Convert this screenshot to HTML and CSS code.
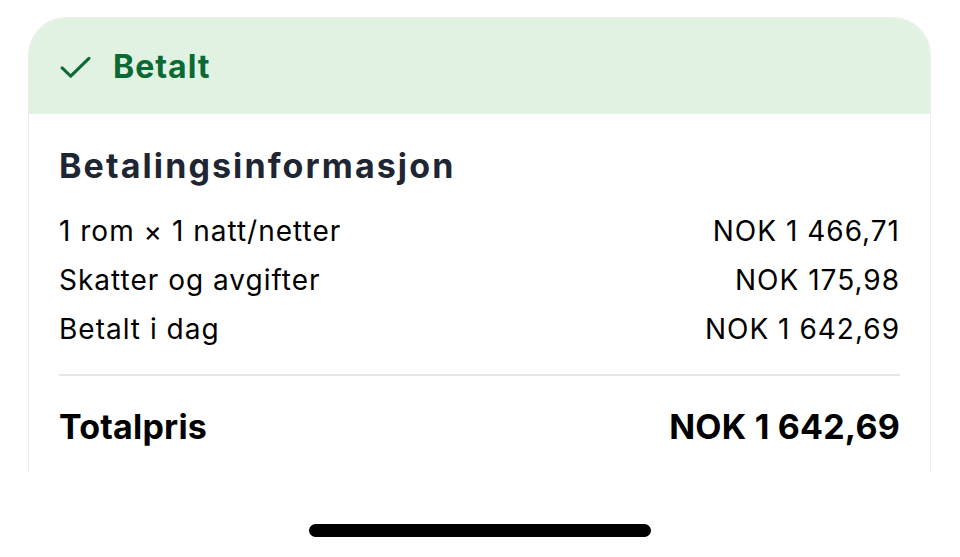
FILE: index.html
```html
<!DOCTYPE html>
<html lang="no">
<head>
<meta charset="utf-8">
<title>Betalt</title>
<link rel="stylesheet" href="styles.css">
</head>
<body>
<div class="screen">
  <section class="card">
    <header class="status">
      <svg class="check" viewBox="0 0 32 24" width="32" height="24" aria-hidden="true">
        <path d="M2 12.5 L11 21 L30 2.5" fill="none" stroke="currentColor" stroke-width="3.2" stroke-linecap="round" stroke-linejoin="round"/>
      </svg>
      <span class="status-text">Betalt</span>
    </header>
    <div class="body">
      <h2 class="title">Betalingsinformasjon</h2>
      <div class="rows">
        <div class="row"><span>1 rom × 1 natt/netter</span><span>NOK 1 466,71</span></div>
        <div class="row"><span>Skatter og avgifter</span><span>NOK 175,98</span></div>
        <div class="row"><span>Betalt i dag</span><span>NOK 1 642,69</span></div>
      </div>
      <div class="divider"></div>
      <div class="row total"><span>Totalpris</span><span>NOK 1 642,69</span></div>
    </div>
  </section>
  <div class="home-indicator"></div>
</div>
</body>
</html>
```
FILE: styles.css
```css
* { box-sizing: border-box; }
html, body {
  margin: 0;
  padding: 0;
  background: #ffffff;
  font-family: Inter, "Noto Sans", "Liberation Sans", sans-serif;
  color: #000;
}
.screen {
  width: 960px;
  height: 557px;
  display: flex;
  flex-direction: column;
  align-items: center;
  padding-top: 17px;
  overflow: hidden;
}
.card {
  width: 903px;
  height: 455px;
  margin-left: -1px;
  border: 1.5px solid #ececec;
  border-bottom: none;
  border-radius: 38px 38px 0 0;
  overflow: hidden;
  background: #fff;
}
.status {
  height: 96px;
  background: #e1f2e3;
  display: flex;
  align-items: center;
  padding-left: 31px;
  gap: 22px;
  color: #0b6a34;
}
.check { width: 31px; height: 23px; margin-top: 2px; }
.status-text {
  font-size: 32px;
  font-weight: 700;
  letter-spacing: 1px;
}
.body {
  padding: 0 30px 0 30px;
}
.title {
  margin: 32px 0 0 0;
  font-size: 34px;
  line-height: 40px;
  font-weight: 700;
  color: #1f2633;
  letter-spacing: 2.1px;
}
.rows {
  margin-top: 21px;
  display: flex;
  flex-direction: column;
}
.row {
  display: flex;
  justify-content: space-between;
  align-items: center;
  font-size: 28px;
  line-height: 49px;
  height: 49px;
  letter-spacing: 1px;
}
.divider {
  height: 2px;
  background: #e6e6e6;
  margin-top: 20px;
}
.row.total {
  margin-top: 26px;
  font-size: 34px;
  font-weight: 700;
  height: 50px;
  line-height: 50px;
  letter-spacing: 0.2px;
}
.home-indicator {
  width: 342px;
  height: 13px;
  border-radius: 7px;
  background: #000;
  margin-top: 52px;
}
```
